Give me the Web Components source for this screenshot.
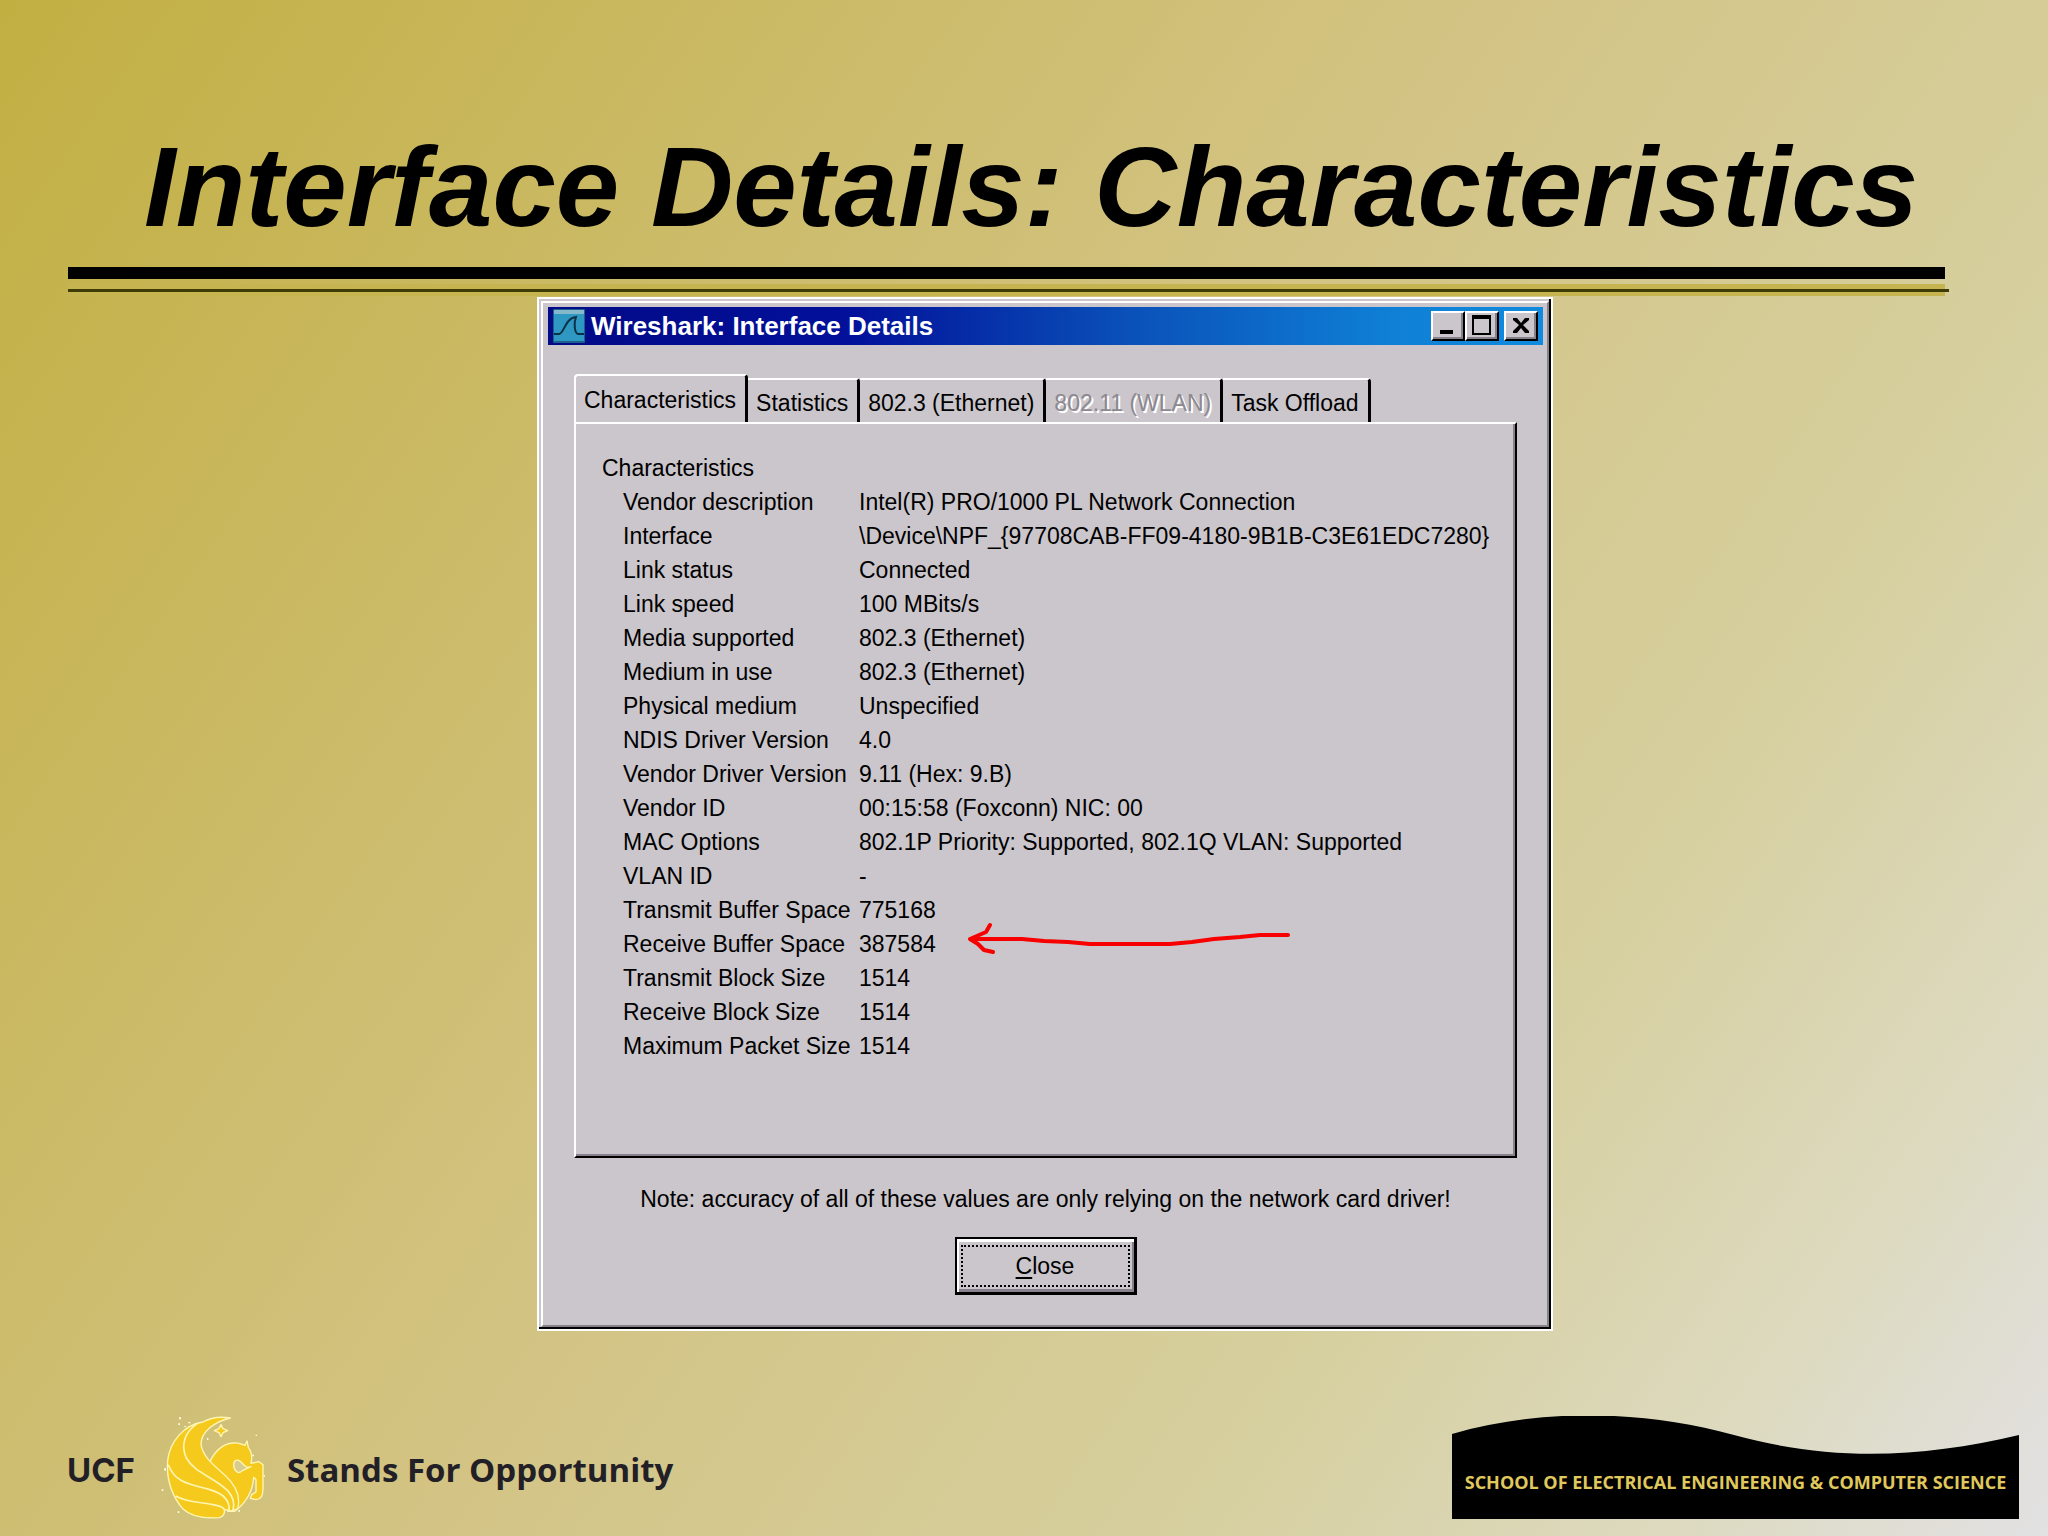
<!DOCTYPE html>
<html lang="en">
<head>
<meta charset="utf-8">
<title>Interface Details: Characteristics</title>
<style>
    html, body {
        margin: 0;
        min-height: 100%;
    }
    body {
        font-family: "Liberation Sans", Arial, sans-serif;
        color: #000;
    }
</style>
</head>
<body>
<lecture-slide>
    <slide-heading slot="heading">Interface Details: Characteristics</slide-heading>
    <dialog-window caption="Wireshark: Interface Details">
        <tab-strip></tab-strip>
        <property-list></property-list>
    </dialog-window>
    <ucf-brand slot="footer"></ucf-brand>
    <school-banner slot="footer">SCHOOL OF ELECTRICAL ENGINEERING &amp; COMPUTER SCIENCE</school-banner>
</lecture-slide>

<script>
// The slide itself: gold background, heading, content, footer
class LectureSlide extends HTMLElement {
    constructor() {
        super();
        this._root = this.attachShadow({ mode: 'open' });
    }
    connectedCallback() {
        this._root.innerHTML = `
        <style>
            :host {
                display: flex;
                flex-direction: column;
                box-sizing: border-box;
                min-height: 100vh;
                background: linear-gradient(125deg, #c2af42 0%, #d3c485 48%, #d6cf9e 72%, #dddac0 88%, #e2e1e3 100%);
            }
            main {
                display: flex;
                justify-content: center;
                padding: 1px 0 0 42px;
            }
            footer {
                display: flex;
                justify-content: space-between;
                align-items: flex-start;
                margin-top: auto;
                padding: 0 29px 16px 67px;
            }
        </style>
        <slot name="heading"></slot>
        <main><slot></slot></main>
        <footer><slot name="footer"></slot></footer>
        `;
    }
}
customElements.define('lecture-slide', LectureSlide);

// Slide title with the double rule under it
class SlideHeading extends HTMLElement {
    constructor() {
        super();
        this._root = this.attachShadow({ mode: 'open' });
    }
    connectedCallback() {
        this._root.innerHTML = `
        <style>
            :host { display: block; padding: 120px 99px 0 68px; }
            h1 {
                margin: 0;
                padding: 0 37px 13px 76px;
                font-size: 114px;
                line-height: 134px;
                font-style: italic;
                font-weight: bold;
                text-align: right;
                white-space: nowrap;
            }
            .thick { height: 12px; margin-right: 4px; background: #000; }
            .band { margin: 5px 4px 0 0; padding: 5px 0 4px; background: #c6b450; }
            .thin { height: 3px; margin-right: -4px; background: #3d3b06; }
        </style>
        <h1><slot></slot></h1>
        <div class="thick"></div>
        <div class="band"><div class="thin"></div></div>
        `;
    }
}
customElements.define('slide-heading', SlideHeading);

// Classic raised window frame: title bar, content, note and close button
class DialogWindow extends HTMLElement {
    constructor() {
        super();
        this._root = this.attachShadow({ mode: 'open' });
    }
    connectedCallback() {
        this._root.innerHTML = `
        <style>
            :host {
                display: block;
                box-sizing: border-box;
                width: 1016px;
                border: 2px solid #fff;
                background: #cbc6cb;
                font-size: 23px;
            }
            .frame {
                padding: 2px 0 0 2px;
                border-right: 2px solid #000;
                border-bottom: 2px solid #000;
            }
            .inner {
                border: 2px solid #fff;
                border-right-color: #86818a;
                border-bottom-color: #86818a;
                padding: 4px 4px 30px 5px;
            }
            header {
                display: flex;
                align-items: center;
                height: 38px;
                padding: 0 5px;
                background: linear-gradient(90deg, #020a86 0%, #02109a 30%, #0a50b8 58%, #0f80d6 85%, #108ade 100%);
                color: #fff;
            }
            header svg { display: block; }
            .icon { margin-right: 6px; }
            h2 { margin: 0; flex: 1; font-size: 26px; line-height: 30px; font-weight: bold; }
            header button {
                width: 34px;
                height: 30px;
                padding: 0;
                border: 2px solid #fff;
                border-right-color: #000;
                border-bottom-color: #000;
                box-shadow: inset -2px -2px #86818a;
                background: #cbc6cb;
            }
            .shut { margin-left: 5px; }
            .body { padding: 29px 26px 0 26px; }
            p { margin: 27px 0 24px; line-height: 28px; text-align: center; }
            .actions { display: flex; justify-content: center; }
            .actions button {
                width: 182px;
                height: 58px;
                padding: 4px;
                border: 2px solid #000;
                border-bottom-width: 3px;
                border-right-width: 3px;
                background: #cbc6cb;
                box-shadow: inset 2px 3px #fff, inset -2px -3px #86818a;
                font: inherit;
                color: #000;
            }
            .actions span {
                display: block;
                border: 2px dotted #000;
                line-height: 38px;
            }
            u { text-underline-offset: 3px; }
        </style>
        <div class="frame"><div class="inner">
            <header>
                <svg class="icon" width="32" height="34" viewBox="0 0 32 34">
                    <rect width="32" height="34" rx="1" fill="#1b5f8c"/>
                    <rect x="1" y="1" width="30" height="31" fill="#2e98c2"/>
                    <rect x="1" y="1" width="30" height="4" fill="#86b8cc"/>
                    <path d="M1 25H6C11 25 12 9 23 8C21 13 21 24 25 25H31" fill="none" stroke="#0b3146" stroke-width="2"/>
                </svg>
                <h2>${this.getAttribute('caption')}</h2>
                <button aria-label="Minimize"><svg width="30" height="26" viewBox="0 0 30 26"><rect x="7" y="17" width="13" height="4"/></svg></button>
                <button aria-label="Maximize"><svg width="30" height="26" viewBox="0 0 30 26"><path d="M5 2H24V22H5ZM7 6V20H22V6Z" fill-rule="evenodd"/></svg></button>
                <button class="shut" aria-label="Close window"><svg width="30" height="26" viewBox="0 0 30 26"><path d="M7 5H11L15 10L19 5H23V7L17 12L23 18V20H19L15 15L11 20H7V18L13 12L7 7Z"/></svg></button>
            </header>
            <div class="body">
                <slot></slot>
                <p>Note: accuracy of all of these values are only relying on the network card driver!</p>
                <div class="actions"><button><span><u>C</u>lose</span></button></div>
            </div>
        </div></div>
        `;
    }
}
customElements.define('dialog-window', DialogWindow);

class TabStrip extends HTMLElement {
    constructor() {
        super();
        this._root = this.attachShadow({ mode: 'open' });
    }
    connectedCallback() {
        this._root.innerHTML = `
        <style>
            :host { display: flex; align-items: flex-end; }
            button {
                height: 44px;
                padding: 4px 9px 0 8px;
                border: 0 solid #fff;
                border-top-width: 2px;
                border-right: 3px solid #000;
                border-radius: 0 4px 0 0;
                background: none;
                font: inherit;
                color: #000;
                white-space: nowrap;
            }
            /* the open tab is taller and covers the panel's top edge */
            [aria-selected="true"] {
                position: relative;
                height: 50px;
                margin-bottom: -2px;
                padding-bottom: 3px;
                border-left-width: 2px;
                border-radius: 4px 4px 0 0;
                background: #cbc6cb;
            }
            :disabled { color: #8d8990; text-shadow: 2px 2px #fff; }
        </style>
        <button role="tab" aria-selected="true">Characteristics</button>
        <button role="tab">Statistics</button>
        <button role="tab">802.3 (Ethernet)</button>
        <button role="tab" disabled>802.11 (WLAN)</button>
        <button role="tab">Task Offload</button>
        `;
    }
}
customElements.define('tab-strip', TabStrip);

const PROPERTIES = [
    ['Vendor description', 'Intel(R) PRO/1000 PL Network Connection'],
    ['Interface', '\\Device\\NPF_{97708CAB-FF09-4180-9B1B-C3E61EDC7280}'],
    ['Link status', 'Connected'],
    ['Link speed', '100 MBits/s'],
    ['Media supported', '802.3 (Ethernet)'],
    ['Medium in use', '802.3 (Ethernet)'],
    ['Physical medium', 'Unspecified'],
    ['NDIS Driver Version', '4.0'],
    ['Vendor Driver Version', '9.11 (Hex: 9.B)'],
    ['Vendor ID', '00:15:58 (Foxconn) NIC: 00'],
    ['MAC Options', '802.1P Priority: Supported, 802.1Q VLAN: Supported'],
    ['VLAN ID', '-'],
    ['Transmit Buffer Space', '775168'],
    ['Receive Buffer Space', '387584'],
    ['Transmit Block Size', '1514'],
    ['Receive Block Size', '1514'],
    ['Maximum Packet Size', '1514']
];

// Tab panel with the adapter's properties
class PropertyList extends HTMLElement {
    constructor() {
        super();
        this._root = this.attachShadow({ mode: 'open' });
    }
    connectedCallback() {
        const rows = PROPERTIES.map(([name, value]) => `<tr><th scope="row">${name}</th><td>${value}</td></tr>`).join('');
        this._root.innerHTML = `
        <style>
            :host {
                display: block;
                position: relative;
                border: 2px solid #fff;
                border-right-color: #000;
                border-bottom-color: #000;
                box-shadow: inset -2px -2px #86818a;
                padding: 27px 24px 93px 26px;
            }
            table { border-collapse: collapse; line-height: 34px; }
            caption { text-align: left; }
            th { width: 236px; padding: 0 0 0 21px; font-weight: normal; text-align: left; }
            td { padding: 0; }
            th, td { white-space: nowrap; }
            /* hand-drawn arrow over the buffer sizes */
            svg { position: absolute; left: 388px; top: 495px; }
        </style>
        <table>
            <caption>Characteristics</caption>
            <tbody>${rows}</tbody>
        </table>
        <svg width="330" height="40" viewBox="0 0 330 40" fill="none" stroke="#f80000" stroke-width="4" stroke-linecap="round" stroke-linejoin="round" aria-hidden="true">
            <path d="M324 16H296L276 18L250 20L228 23L206 25H126L104 23L80 22L58 20H6M26 6L22 13L6 20L14 25L20 31L29 33"/>
        </svg>
        `;
    }
}
customElements.define('property-list', PropertyList);

class UcfBrand extends HTMLElement {
    constructor() {
        super();
        this._root = this.attachShadow({ mode: 'open' });
    }
    connectedCallback() {
        this._root.innerHTML = `
        <style>
            :host {
                display: flex;
                align-items: center;
                font-family: "Open Sans", "Liberation Sans", sans-serif;
                font-size: 33px;
                font-weight: bold;
                line-height: 40px;
                color: #231f26;
            }
            span { padding-top: 4px; }
            .name { font-family: Inter, "Liberation Sans", sans-serif; }
            svg { margin: 0 22px 0 26px; }
        </style>
        <span class="name">UCF</span>
        <svg width="104" height="104" viewBox="40 44 312 312" aria-hidden="true">
            <g fill="#f5ca1c" stroke="#fff6b4" stroke-width="4" stroke-linejoin="round">
                <path d="M188 178C205 145 225 128 255 125C275 122 285 130 292 132L298 119L302 138C312 152 314 170 310 186L334 181L346 190V262C345 285 340 294 325 295L308 291L312 280L325 272V235L318 228C316 262 300 300 262 330L240 330Z"/>
                <path d="M248 50C212 44 186 50 166 62C110 70 66 120 60 178C56 230 70 280 105 322C135 350 175 352 215 349C228 346 232 334 230 324L250 329L270 322C280 285 262 250 232 222C200 192 166 168 160 130C160 92 198 62 248 50Z"/>
                <path d="M284 208C272 222 258 206 258 190C258 176 270 172 280 182C290 192 296 202 310 196Z" fill="#d8cb8e"/>
                <path d="M220 70L226 82L240 88L226 94L220 106L214 94L200 88L214 82Z"/>
            </g>
            <g fill="none" stroke="#fff6b4" stroke-width="5">
                <path d="M150 66C112 90 98 130 116 170C140 214 200 228 240 268C256 286 262 306 256 328"/>
                <path d="M62 190C82 246 132 250 184 264C226 276 248 296 244 328"/>
                <path d="M84 284C118 304 160 302 196 310C216 314 228 316 230 326"/>
            </g>
            <g fill="#fffbe0">
                <path d="M94 48h6v6h-6zM92 66h5v5h-5zM110 74h5v3h-5zM324 100h4v4h-4zM178 110h4v6h-4zM42 264h5v5h-5zM50 200h5v8h-5zM314 160h5v5h-5zM90 330h5v5h-5zM272 326h5v5h-5zM348 222h4v4h-4zM122 62h6v4h-6z"/>
            </g>
        </svg>
        <span>Stands For Opportunity</span>
        `;
    }
}
customElements.define('ucf-brand', UcfBrand);

// Black wave with the school's name on it
class SchoolBanner extends HTMLElement {
    constructor() {
        super();
        this._root = this.attachShadow({ mode: 'open' });
    }
    connectedCallback() {
        this._root.innerHTML = `
        <style>
            :host {
                display: block;
                width: 567px;
                font-family: "Open Sans", "Liberation Sans", sans-serif;
                font-size: 18px;
                font-weight: bold;
                color: #e0c95c;
            }
            svg { display: block; width: 100%; height: 39px; }
            div { padding: 13px 0 22px; background: #000; line-height: 29px; white-space: nowrap; text-align: center; }
        </style>
        <svg viewBox="0 0 567 39" preserveAspectRatio="none" aria-hidden="true">
            <path d="M0 18C90 -8 190 -6 282 19C380 46 470 42 567 19V39H0Z"/>
        </svg>
        <div><slot></slot></div>
        `;
    }
}
customElements.define('school-banner', SchoolBanner);
</script>
</body>
</html>
